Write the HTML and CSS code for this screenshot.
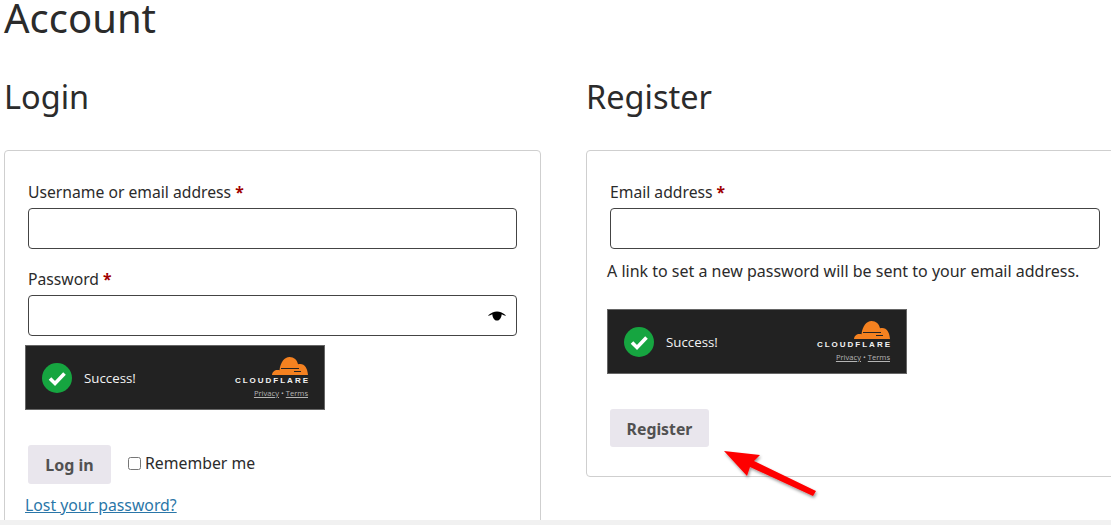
FILE: index.html
```html
<!DOCTYPE html>
<html lang="en">
<head>
    <meta charset="UTF-8">
    <meta name="viewport" content="width=device-width, initial-scale=1.0">
    <title>Account</title>
    <link rel="stylesheet" href="styles.css">
</head>
<body>

<div class="page">
    <h1>Account</h1>
    <div class="columns">
        <div class="column">
            <h2>Login</h2>
            <form class="card card-login">
                <div class="form-group">
                    <label for="username">Username or email address <span class="required">*</span></label>
                    <input type="text" id="username">
                </div>
                <div class="form-group form-group-last">
                    <label for="password">Password <span class="required">*</span></label>
                    <div class="password-wrap">
                        <input type="password" id="password">
                        <svg class="eye" viewBox="0 0 18 10" width="18" height="10" aria-hidden="true">
                            <path d="M0 4.6C3 1.4 6 .4 9 .4s6 1 9 4.2c-1.2.3-2.600-.6-4.300-1.400C13.500 6.800 11.500 9.600 9 9.600S4.500 6.800 4.300 3.200C2.600 4 1.200 4.900 0 4.600z"/>
                        </svg>
                    </div>
                </div>
                <div class="turnstile">
                    <svg class="tick" viewBox="0 0 30 30" width="30" height="30" aria-hidden="true">
                        <circle cx="15" cy="15" r="15" fill="#16a540"/>
                        <path d="M8 15.500l5 5 9.500-10" fill="none" stroke="#fff" stroke-width="3.600"/>
                    </svg>
                    <span class="turnstile-text">Success!</span>
                    <div class="turnstile-brand">
                        <svg class="cloud" viewBox="0 0 36 18" width="36" height="18" aria-hidden="true">
                            <path d="M0 18c.2-3 2.600-5 5.500-5 .8 0 1.400.1 2 .3C8.500 5 12.500 0 17.500 0c4.500 0 7.700 3 8.500 7.300.8-.3 1.500-.4 2.300-.4 4.500 0 7.300 4.500 7.700 11.100z" fill="#f48120"/>
                            <path d="M9 11.500h18M22 14.500h7" stroke="#222" stroke-width="1" fill="none"/>
                        </svg>
                        <span class="cloudflare">CLOUDFLARE</span>
                        <span class="turnstile-links"><u>Privacy</u> &bull; <u>Terms</u></span>
                    </div>
                </div>
                <div class="login-actions">
                    <button type="button" class="button">Log in</button>
                    <label class="remember"><input type="checkbox"> Remember me</label>
                </div>
                <a href="#" class="lost-password">Lost your password?</a>
            </form>
        </div>

        <div class="column">
            <h2>Register</h2>
            <form class="card card-register">
                <div class="form-group">
                    <label for="email">Email address <span class="required">*</span></label>
                    <input type="email" id="email">
                </div>
                <p class="hint">A link to set a new password will be sent to your email address.</p>
                <div class="turnstile">
                    <svg class="tick" viewBox="0 0 30 30" width="30" height="30" aria-hidden="true">
                        <circle cx="15" cy="15" r="15" fill="#16a540"/>
                        <path d="M8 15.500l5 5 9.500-10" fill="none" stroke="#fff" stroke-width="3.600"/>
                    </svg>
                    <span class="turnstile-text">Success!</span>
                    <div class="turnstile-brand">
                        <svg class="cloud" viewBox="0 0 36 18" width="36" height="18" aria-hidden="true">
                            <path d="M0 18c.2-3 2.600-5 5.500-5 .8 0 1.400.1 2 .3C8.500 5 12.500 0 17.500 0c4.500 0 7.700 3 8.500 7.300.8-.3 1.500-.4 2.300-.4 4.500 0 7.300 4.500 7.700 11.100z" fill="#f48120"/>
                            <path d="M9 11.500h18M22 14.500h7" stroke="#222" stroke-width="1" fill="none"/>
                        </svg>
                        <span class="cloudflare">CLOUDFLARE</span>
                        <span class="turnstile-links"><u>Privacy</u> &bull; <u>Terms</u></span>
                    </div>
                </div>
                <button type="button" class="button button-register">Register</button>
            </form>
        </div>
    </div>

    <!-- annotation drawn over the screenshot -->
    <svg class="arrow" viewBox="0 0 100 70" width="100" height="70" aria-hidden="true">
        <defs>
            <filter id="arrowShadow" x="-20%" y="-20%" width="140%" height="140%">
                <feDropShadow dx="1" dy="2" stdDeviation="1.500" flood-color="#000" flood-opacity="0.4"/>
            </filter>
        </defs>
        <path d="M3 5L39 9 33 15 95 45 92 50 29 21 26 30z" fill="#fe0000" filter="url(#arrowShadow)"/>
    </svg>
</div>
<div class="footer-strip"></div>

</body>
</html>
```

FILE: styles.css
```css
:root {
    --text-color: #2b2b2b;
    --border-color: #cfcfcf;
    --button-color: #e9e6ed;
    --link-color: #2a76a8;
}

* {
    box-sizing: border-box;
}

body {
    margin: 0;
    height: 525px;
    overflow: hidden;
    background: #ffffff;
    color: var(--text-color);
    font-family: "Noto Sans", "Open Sans", sans-serif;
    font-size: 16px;
}

.page {
    position: relative;
    height: 520px;
    padding-left: 4px;
    overflow: hidden;
}

.footer-strip {
    height: 5px;
    background: #f1f1f1;
}

h1 {
    margin: 0;
    font-size: 40px;
    font-weight: 400;
    line-height: 36px;
}

h2 {
    margin: 0;
    font-size: 32.500px;
    font-weight: 400;
    line-height: 44px;
}

.columns {
    display: grid;
    grid-template-columns: 537px 537px;
    column-gap: 45px;
    margin-top: 39px;
}

.card {
    margin-top: 31px;
    padding: 30px 23px 0;
    border: 1px solid var(--border-color);
    border-radius: 4px;
}

.card-login {
    height: 400px;
}

.card-register {
    height: 327px;
}

.card-register .form-group input {
    width: 490px;
}

.form-group {
    margin-bottom: 19px;
}

.form-group-last {
    margin-bottom: 9px;
}

.form-group label {
    display: block;
    margin-bottom: 4px;
    font-size: 15.700px;
    line-height: 23px;
}

.required {
    color: #a00000;
    font-weight: 700;
}

.form-group input {
    display: block;
    width: 100%;
    height: 41px;
    border: 1px solid #444444;
    border-radius: 4px;
    background: #ffffff;
}

.password-wrap {
    position: relative;
}

.eye {
    position: absolute;
    top: 16px;
    right: 11px;
}

.hint {
    margin: -8px 0 26px -3px;
    line-height: 23px;
    white-space: nowrap;
}

.turnstile {
    display: flex;
    align-items: center;
    width: 300px;
    height: 65px;
    margin-left: -3px;
    padding: 0 16px 0 16px;
    border: 1px solid #666666;
    background: #222222;
    color: #f2f2f2;
}

.turnstile-text {
    margin-left: 12px;
    font-family: "Open Sans", sans-serif;
    font-size: 13.300px;
}

.turnstile-brand {
    display: flex;
    flex-direction: column;
    align-items: flex-end;
    margin-left: auto;
}

.cloud {
    display: block;
}

.cloudflare {
    margin-top: 1px;
    font-family: "Liberation Sans", sans-serif;
    font-size: 8px;
    font-weight: 700;
    letter-spacing: 2px;
    margin-right: -2px;
    line-height: 10px;
}

.turnstile-links {
    margin-top: 2px;
    color: #b5b5b5;
    font-family: "Open Sans", sans-serif;
    font-size: 7.600px;
    line-height: 11px;
}

.button {
    border: 0;
    border-radius: 3px;
    background: var(--button-color);
    color: #515151;
    font-family: inherit;
    font-size: 16px;
    font-weight: 700;
}

.login-actions {
    display: flex;
    align-items: flex-start;
    margin-top: 35px;
}

.login-actions .button {
    width: 83px;
    height: 39px;
}

.remember {
    display: flex;
    align-items: center;
    margin: 6px 0 0 17px;
    font-size: 15.800px;
    line-height: 24px;
}

.remember input {
    width: 13px;
    height: 13px;
    margin: 0 4px 0 0;
}

.lost-password {
    display: block;
    margin: 9px 0 0 -3px;
    color: var(--link-color);
    font-size: 15.800px;
    line-height: 24px;
}

.button-register {
    display: block;
    width: 99px;
    height: 38px;
    margin-top: 35px;
    padding-top: 2px;
    font-size: 15.800px;
}

.arrow {
    position: absolute;
    top: 446px;
    left: 721px;
}
```
